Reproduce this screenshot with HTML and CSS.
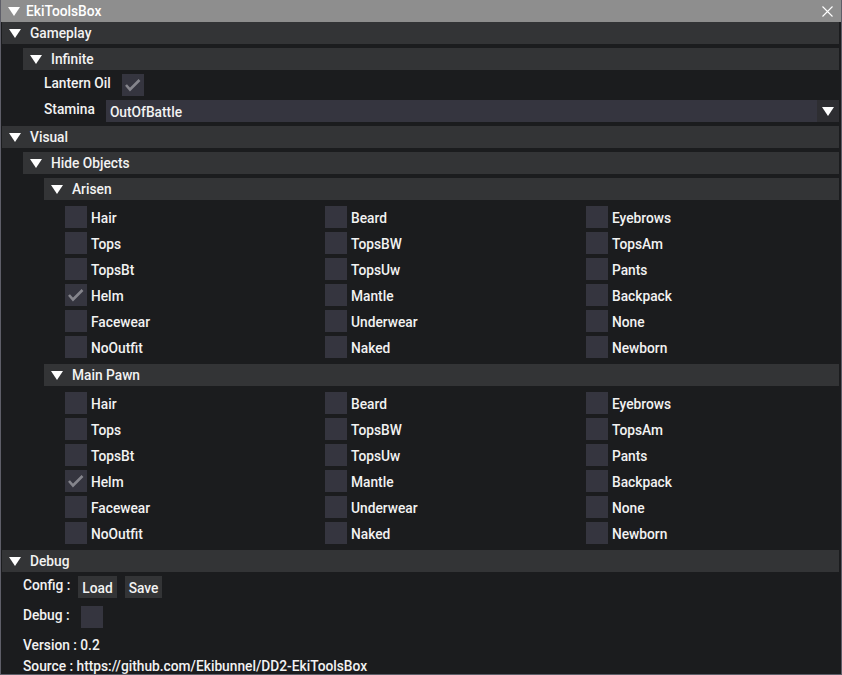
FILE: index.html
```html
<!DOCTYPE html>
<html>
<head>
<meta charset="utf-8">
<link rel="stylesheet" href="styles.css">
</head>
<body>
<div class="window">
  <div class="titlebar">
    <svg class="tri" width="12" height="9" viewBox="0 0 12 9"><polygon points="0,0 12,0 6,9" fill="#fff"/></svg>
    <span class="title">EkiToolsBox</span>
    <svg class="close" width="11" height="11" viewBox="0 0 11 11"><path d="M0.5 0.5 L10.5 10.5 M10.5 0.5 L0.5 10.5" stroke="#fff" stroke-width="1.1" fill="none"/></svg>
  </div>
  <div class="body">
    <div class="header"><svg class="tri" width="12" height="9" viewBox="0 0 12 9"><polygon points="0,0 12,0 6,9" fill="#fff"/></svg><span>Gameplay</span></div>
    <div class="indent">
      <div class="header"><svg class="tri" width="12" height="9" viewBox="0 0 12 9"><polygon points="0,0 12,0 6,9" fill="#fff"/></svg><span>Infinite</span></div>
      <div class="indent">
        <div class="row">
          <span class="label">Lantern Oil</span>
          <span class="cb"><svg width="22" height="22" viewBox="0 0 22 22"><polyline points="4,11 8,15.5 17.5,6" stroke="#85858c" stroke-width="2.6" fill="none"/></svg></span>
        </div>
        <div class="row">
          <span class="label label-stamina">Stamina</span>
          <div class="combo">
            <span class="combo-value">OutOfBattle</span>
            <span class="combo-arrow"><svg width="12" height="9" viewBox="0 0 12 9"><polygon points="0,0 12,0 6,9" fill="#fff"/></svg></span>
          </div>
        </div>
      </div>
    </div>

    <div class="header"><svg class="tri" width="12" height="9" viewBox="0 0 12 9"><polygon points="0,0 12,0 6,9" fill="#fff"/></svg><span>Visual</span></div>
    <div class="indent">
      <div class="header"><svg class="tri" width="12" height="9" viewBox="0 0 12 9"><polygon points="0,0 12,0 6,9" fill="#fff"/></svg><span>Hide Objects</span></div>
      <div class="indent">
        <div class="header"><svg class="tri" width="12" height="9" viewBox="0 0 12 9"><polygon points="0,0 12,0 6,9" fill="#fff"/></svg><span>Arisen</span></div>
        <div class="grid">
          <div class="item"><span class="cb"></span>Hair</div>
          <div class="item"><span class="cb"></span>Beard</div>
          <div class="item"><span class="cb"></span>Eyebrows</div>
          <div class="item"><span class="cb"></span>Tops</div>
          <div class="item"><span class="cb"></span>TopsBW</div>
          <div class="item"><span class="cb"></span>TopsAm</div>
          <div class="item"><span class="cb"></span>TopsBt</div>
          <div class="item"><span class="cb"></span>TopsUw</div>
          <div class="item"><span class="cb"></span>Pants</div>
          <div class="item"><span class="cb"><svg width="22" height="22" viewBox="0 0 22 22"><polyline points="4,11 8,15.5 17.5,6" stroke="#85858c" stroke-width="2.6" fill="none"/></svg></span>Helm</div>
          <div class="item"><span class="cb"></span>Mantle</div>
          <div class="item"><span class="cb"></span>Backpack</div>
          <div class="item"><span class="cb"></span>Facewear</div>
          <div class="item"><span class="cb"></span>Underwear</div>
          <div class="item"><span class="cb"></span>None</div>
          <div class="item"><span class="cb"></span>NoOutfit</div>
          <div class="item"><span class="cb"></span>Naked</div>
          <div class="item"><span class="cb"></span>Newborn</div>
        </div>
        <div class="header"><svg class="tri" width="12" height="9" viewBox="0 0 12 9"><polygon points="0,0 12,0 6,9" fill="#fff"/></svg><span>Main Pawn</span></div>
        <div class="grid">
          <div class="item"><span class="cb"></span>Hair</div>
          <div class="item"><span class="cb"></span>Beard</div>
          <div class="item"><span class="cb"></span>Eyebrows</div>
          <div class="item"><span class="cb"></span>Tops</div>
          <div class="item"><span class="cb"></span>TopsBW</div>
          <div class="item"><span class="cb"></span>TopsAm</div>
          <div class="item"><span class="cb"></span>TopsBt</div>
          <div class="item"><span class="cb"></span>TopsUw</div>
          <div class="item"><span class="cb"></span>Pants</div>
          <div class="item"><span class="cb"><svg width="22" height="22" viewBox="0 0 22 22"><polyline points="4,11 8,15.5 17.5,6" stroke="#85858c" stroke-width="2.6" fill="none"/></svg></span>Helm</div>
          <div class="item"><span class="cb"></span>Mantle</div>
          <div class="item"><span class="cb"></span>Backpack</div>
          <div class="item"><span class="cb"></span>Facewear</div>
          <div class="item"><span class="cb"></span>Underwear</div>
          <div class="item"><span class="cb"></span>None</div>
          <div class="item"><span class="cb"></span>NoOutfit</div>
          <div class="item"><span class="cb"></span>Naked</div>
          <div class="item"><span class="cb"></span>Newborn</div>
        </div>
      </div>
    </div>

    <div class="header"><svg class="tri" width="12" height="9" viewBox="0 0 12 9"><polygon points="0,0 12,0 6,9" fill="#fff"/></svg><span>Debug</span></div>
    <div class="indent">
      <div class="row">
        <span class="label label-config">Config :</span>
        <span class="button">Load</span>
        <span class="button button-save">Save</span>
      </div>
      <div class="row row-spaced">
        <span class="label">Debug :</span>
        <span class="cb"></span>
      </div>
      <div class="text row-spaced">Version : 0.2</div>
      <div class="text">Source : https://github.com/Ekibunnel/DD2-EkiToolsBox</div>
    </div>
  </div>
</div>
</body>
</html>
```

FILE: styles.css
```css
html, body {
  margin: 0;
  padding: 0;
  background: #1b1c1e;
}

.window {
  width: 842px;
  height: 675px;
  box-sizing: border-box;
  border: 1px solid #5e5e68;
  border-top: none;
  background: #1b1c1e;
  font-family: Roboto, "Liberation Sans", sans-serif;
  font-weight: 500;
  font-size: 13.75px;
  line-height: 16px;
  color: #f2f2f2;
  display: flex;
  flex-direction: column;
  overflow: hidden;
}

.titlebar {
  height: 22px;
  margin: 0 -1px;
  background: #8e8e8e;
  display: flex;
  align-items: center;
  padding-left: 8px;
  color: #fff;
}

.titlebar .tri {
  margin-right: 6px;
}

.title {
  flex: 1;
}

.close {
  margin-right: 9px;
}

.body {
  display: flex;
  flex-direction: column;
  gap: 4px;
  padding: 0 2px 0 1px;
}

.header {
  height: 22px;
  background: #333436;
  display: flex;
  align-items: center;
  padding-left: 7px;
}

.header .tri {
  margin-right: 9px;
}

.indent {
  display: flex;
  flex-direction: column;
  gap: 4px;
  padding-left: 21px;
}

.row {
  display: flex;
  align-items: flex-start;
  height: 22px;
}

.row-spaced {
  margin-top: 4px;
}

.label {
  margin-right: 11px;
  padding-top: 1px;
}

.label-config {
  margin-right: 8px;
}

.cb {
  width: 22px;
  height: 22px;
  background: #35353f;
  display: inline-block;
  flex: none;
}

.cb svg {
  display: block;
}

.combo {
  flex: 1;
  height: 22px;
  background: #35353f;
  display: flex;
  align-items: center;
}

.combo-value {
  flex: 1;
  padding-left: 4px;
  padding-top: 1px;
}

.combo-arrow {
  width: 22px;
  height: 22px;
  background: #2e2e32;
  display: flex;
  align-items: center;
  justify-content: center;
}

.button {
  height: 22px;
  background: #333436;
  padding: 1px 4px 0;
  box-sizing: border-box;
  display: flex;
  align-items: center;
}

.button-save {
  margin-left: 8px;
}

.grid {
  display: grid;
  grid-template-columns: 260px 261px 1fr;
  row-gap: 4px;
  padding: 2px 0 2px 21px;
}

.item {
  display: flex;
  align-items: center;
  height: 22px;
  padding-top: 1px;
  box-sizing: border-box;
}

.item .cb {
  margin-right: 4px;
  align-self: flex-start;
  margin-top: -1px;
}

.text {
  height: 16px;
  padding-top: 1px;
}
```
